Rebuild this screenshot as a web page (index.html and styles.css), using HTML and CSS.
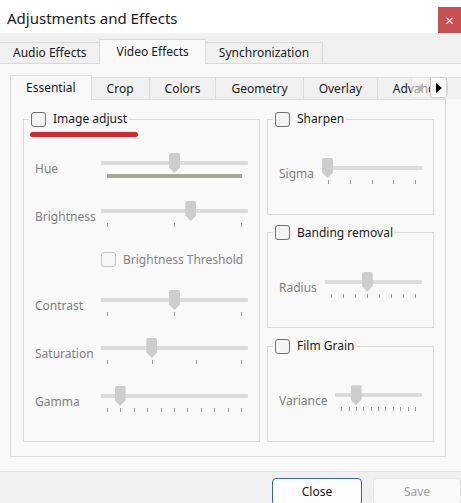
FILE: index.html
```html
<!DOCTYPE html>
<html lang="en">
<head>
<meta charset="utf-8">
<title>Adjustments and Effects</title>
<link rel="stylesheet" href="styles.css">
</head>
<body>
<div class="titlebar">
  <span class="title">Adjustments and Effects</span>
  <span class="close-x">×</span>
</div>
<div class="otabs">
  <div class="otab">Audio Effects</div>
  <div class="otab active">Video Effects</div>
  <div class="otab">Synchronization</div>
</div>
<div class="opane">
  <div class="itabs">
    <div class="itab active">Essential</div>
    <div class="itab">Crop</div>
    <div class="itab">Colors</div>
    <div class="itab">Geometry</div>
    <div class="itab">Overlay</div>
    <div class="itab">Advanced</div>
    <div class="sbtn sleft"><svg width="6" height="10" viewBox="0 0 6 10"><path d="M6 0 L0 5 L6 10 Z" fill="#b8b8b8"/></svg></div>
    <div class="sbtn sright"><svg width="6" height="10" viewBox="0 0 6 10"><path d="M0 0 L6 5 L0 10 Z" fill="#000"/></svg></div>
  </div>
  <div class="ipane">
    <fieldset class="group">
      <legend><span class="cb"></span><span class="glabel">Image adjust</span><span class="redline"></span></legend>
      <div class="gbody main">
        <div class="srow">
          <span class="slabel">Hue</span>
          <div class="slider">
            <div class="groove"></div>
            <div class="handle" style="--v:0.5"></div>
            <div class="huebar"></div>
          </div>
        </div>
        <div class="srow">
          <span class="slabel">Brightness</span>
          <div class="slider">
            <div class="groove"></div>
            <div class="handle" style="--v:0.62"></div>
            <div class="ticks"><i></i><i></i><i></i></div>
          </div>
        </div>
        <div class="trow">
          <span class="cb dis"></span><span class="tlabel">Brightness Threshold</span>
        </div>
        <div class="srow">
          <span class="slabel">Contrast</span>
          <div class="slider">
            <div class="groove"></div>
            <div class="handle" style="--v:0.5"></div>
            <div class="ticks"><i></i><i></i><i></i></div>
          </div>
        </div>
        <div class="srow">
          <span class="slabel">Saturation</span>
          <div class="slider">
            <div class="groove"></div>
            <div class="handle" style="--v:0.333"></div>
            <div class="ticks"><i></i><i></i><i></i><i></i></div>
          </div>
        </div>
        <div class="srow">
          <span class="slabel">Gamma</span>
          <div class="slider">
            <div class="groove"></div>
            <div class="handle" style="--v:0.1"></div>
            <div class="ticks"><i></i><i></i><i></i><i></i><i></i><i></i><i></i><i></i><i></i><i></i><i></i></div>
          </div>
        </div>
      </div>
    </fieldset>
    <div class="rcol">
      <fieldset class="group">
        <legend><span class="cb"></span><span class="glabel">Sharpen</span></legend>
        <div class="gbody side">
          <div class="rrow">
            <span class="slabel">Sigma</span>
            <div class="slider">
              <div class="groove"></div>
              <div class="handle" style="--v:0"></div>
              <div class="ticks"><i></i><i></i><i></i><i></i><i></i></div>
            </div>
          </div>
        </div>
      </fieldset>
      <fieldset class="group">
        <legend><span class="cb"></span><span class="glabel">Banding removal</span></legend>
        <div class="gbody side">
          <div class="rrow">
            <span class="slabel">Radius</span>
            <div class="slider">
              <div class="groove"></div>
              <div class="handle" style="--v:0.4286"></div>
              <div class="ticks"><i></i><i></i><i></i><i></i><i></i><i></i><i></i><i></i></div>
            </div>
          </div>
        </div>
      </fieldset>
      <fieldset class="group">
        <legend><span class="cb"></span><span class="glabel">Film Grain</span></legend>
        <div class="gbody side">
          <div class="rrow">
            <span class="slabel">Variance</span>
            <div class="slider">
              <div class="groove"></div>
              <div class="handle" style="--v:0.2"></div>
              <div class="ticks"><i></i><i></i><i></i><i></i><i></i><i></i><i></i><i></i><i></i><i></i><i></i></div>
            </div>
          </div>
        </div>
      </fieldset>
    </div>
  </div>
</div>
<div class="footer">
  <button class="btn primary">Close</button>
  <button class="btn disabled">Save</button>
</div>
</body>
</html>
```
FILE: styles.css
```css
* { box-sizing: border-box; }
html, body { margin: 0; padding: 0; }
body {
  width: 461px;
  height: 503px;
  overflow: hidden;
  background: #f0f0f0;
  font-family: "Noto Sans", "Open Sans", "Liberation Sans", sans-serif;
  font-size: 12px;
  color: #1a1a1a;
}

/* title bar */
.titlebar {
  height: 33px;
  background: #ffffff;
  display: flex;
  align-items: flex-start;
}
.title {
  font-size: 15px;
  line-height: 20px;
  margin: 8px 0 0 7px;
  color: #1a1a1a;
}
.close-x {
  margin: 7px 0 0 auto;
  width: 23px;
  height: 26px;
  background: #c75050;
  color: #ffffff;
  display: flex;
  align-items: center;
  justify-content: center;
  font-size: 15px;
  line-height: 1;
}

/* outer tabs */
.otabs {
  height: 31px;
  display: flex;
  align-items: flex-end;
  border-bottom: 1px solid #d9d9d9;
}
.otab {
  height: 21px;
  line-height: 19px;
  padding: 0 13px;
  border: 1px solid #d9d9d9;
  border-bottom: 0;
  background: #f0f0f0;
  margin-left: -1px;
  white-space: nowrap;
}
.otab.active {
  height: 25px;
  margin-bottom: -1px;
  padding: 2px 16px 0;
  background: #f9f9f9;
  position: relative;
  z-index: 1;
}

/* outer pane */
.opane {
  height: 408px;
  background: #f9f9f9;
  border-bottom: 1px solid #e3e3e3;
  padding: 11px 15px 0 10px;
}

/* inner tabs */
.itabs {
  position: relative;
  height: 24px;
  display: flex;
  align-items: flex-end;
}
.itab {
  height: 22px;
  line-height: 21px;
  padding: 0 15px;
  border: 1px solid #dcdcdc;
  border-bottom: 0;
  background: #f0f0f0;
  margin-left: -1px;
  white-space: nowrap;
}
.itab:first-child { margin-left: 0; }
.itab.active {
  height: 25px;
  margin-bottom: -1px;
  padding-top: 1px;
  background: #f9f9f9;
  position: relative;
  z-index: 1;
}
.sbtn {
  position: absolute;
  top: 2px;
  height: 21px;
  display: flex;
  align-items: center;
  justify-content: center;
  z-index: 2;
}
.sleft {
  right: 17px;
  width: 18px;
  background: rgba(249, 249, 249, 0.55);
  border: 1px solid rgba(0, 0, 0, 0.05);
  border-radius: 2px;
}
.sright {
  right: -1px;
  width: 17px;
  background: #fdfdfd;
  border: 1px solid #cfcfcf;
  border-radius: 2px;
}

/* inner pane */
.ipane {
  height: 358px;
  width: 436px;
  border: 1px solid #dcdcdc;
  background: #f9f9f9;
  display: grid;
  grid-template-columns: 237px 167px;
  column-gap: 7px;
  padding: 11px 11px 14px 12px;
}
.rcol {
  display: flex;
  flex-direction: column;
  gap: 10px;
}
.rcol .group { flex: 1; }

/* group boxes */
.group {
  margin: 0;
  padding: 0;
  min-width: 0;
  border: 1px solid #d9d9d9;
}
.group legend {
  position: relative;
  margin-left: 5px;
  padding: 0 2px;
  height: 16px;
  display: flex;
  align-items: center;
  gap: 7px;
}
.glabel {
  line-height: 16px;
  color: #1a1a1a;
  white-space: nowrap;
}
.cb {
  display: inline-block;
  width: 15px;
  height: 15px;
  border: 1px solid #707070;
  border-radius: 3px;
  background: #f4f4f4;
  flex-shrink: 0;
}
.cb.dis {
  border-color: #c4c4c4;
  background: #f7f7f7;
}
.redline {
  position: absolute;
  left: 1px;
  top: 21px;
  width: 108px;
  height: 5px;
  border-radius: 3px;
  background: #d7262c;
}

.gbody.main {
  padding: 26px 11px 0 11px;
  display: flex;
  flex-direction: column;
}
.srow {
  height: 48px;
  display: grid;
  grid-template-columns: 66px 147px;
  align-items: start;
}
.trow {
  height: 41px;
  padding: 3px 0 0 66px;
  display: flex;
  align-items: flex-start;
  gap: 7px;
}
.tlabel {
  color: #858585;
  line-height: 15px;
}
.slabel {
  padding-top: 8px;
  line-height: 16px;
  color: #808080;
  white-space: nowrap;
}

.gbody.side {
  padding: 31px 11px 0 11px;
}
.rrow {
  display: flex;
  gap: 8px;
  align-items: flex-start;
}
.rrow .slider { flex: 1; }

/* slider */
.slider {
  position: relative;
  height: 26px;
}
.groove {
  position: absolute;
  left: 0;
  right: 0;
  top: 8px;
  height: 4px;
  background: #dcdcdc;
  border-radius: 1px;
}
.handle {
  position: absolute;
  top: 0;
  left: calc(var(--v) * (100% - 11px));
  width: 11px;
  height: 20px;
  background: #cdcdcd;
  border-radius: 2px 2px 0 0;
  clip-path: polygon(0 0, 100% 0, 100% 72%, 50% 100%, 0 72%);
}
.ticks {
  position: absolute;
  left: 0;
  right: 0;
  top: 22px;
  padding: 0 6px;
  display: flex;
  justify-content: space-between;
}
.ticks i {
  display: block;
  width: 1px;
  height: 4px;
  background: #9c9c9c;
}
.huebar {
  position: absolute;
  left: 6px;
  right: 6px;
  top: 21px;
  height: 4px;
  background: #a8a898;
}

/* footer */
.footer {
  height: 31px;
  display: flex;
  justify-content: flex-end;
  gap: 11px;
  padding-top: 6px;
}
.btn {
  font-family: inherit;
  font-size: 12px;
  height: 27px;
  width: 90px;
  border-radius: 4px;
  padding: 0;
}
.btn.primary {
  border: 1px solid #2f6aa8;
  background: #fdfdfd;
  color: #1a1a1a;
}
.btn.disabled {
  width: 88px;
  border: 1px solid #e3e3e3;
  background: #fafafa;
  color: #a0a0a0;
}
```
